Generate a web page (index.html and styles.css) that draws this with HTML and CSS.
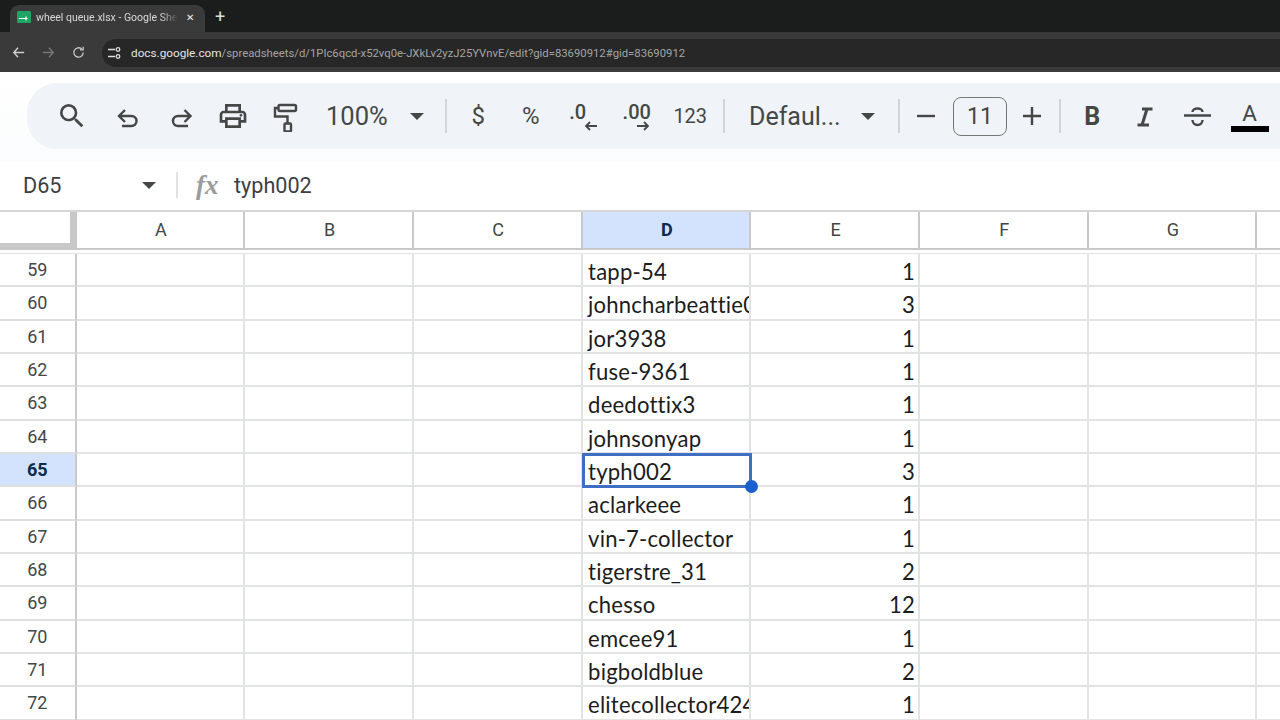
FILE: index.html
```html
<!DOCTYPE html>
<html lang="en">
<head>
<meta charset="utf-8">
<title>wheel queue.xlsx - Google Sheets</title>
<link rel="stylesheet" href="styles.css">
</head>
<body>
<header class="browser">
  <div class="tabstrip">
    <div class="tab">
      <svg class="favicon" viewBox="0 0 14 12"><rect width="14" height="12" rx="1.5" fill="#1fa463"/><path d="M2 7.5h8.5M9 5.5v4" stroke="#fff" stroke-width="1.2" fill="none"/></svg>
      <span class="tab-title">wheel queue.xlsx - Google Shee</span>
      <span class="tab-close">✕</span>
    </div>
    <span class="new-tab">+</span>
  </div>
  <div class="addressbar">
    <svg class="nav" viewBox="0 0 16 16"><path d="M14 8H3M7.5 3 3 8l4.500 5" fill="none" stroke="#d0d0d0" stroke-width="1.500"/></svg>
    <svg class="nav" viewBox="0 0 16 16"><path d="M2 8h11M8.500 3 13 8l-4.500 5" fill="none" stroke="#777" stroke-width="1.500"/></svg>
    <svg class="nav" viewBox="0 0 16 16"><path d="M13 8a5 5 0 1 1-1.600-3.700M13 1.800v3.400H9.600" fill="none" stroke="#c8c8c8" stroke-width="1.400"/></svg>
    <div class="urlpill">
      <svg class="site" viewBox="0 0 16 16"><path d="M2 4.500h7M2 11.500h7" stroke="#ddd" stroke-width="1.400"/><circle cx="12" cy="4.500" r="1.800" fill="none" stroke="#ddd" stroke-width="1.300"/><circle cx="12" cy="11.500" r="1.800" fill="none" stroke="#ddd" stroke-width="1.300"/></svg>
      <span class="url"><b>docs.google.com</b>/spreadsheets/d/1PIc6qcd-x52vq0e-JXkLv2yzJ25YVnvE/edit?gid=83690912#gid=83690912</span>
    </div>
  </div>
</header>

<section class="toolwrap">
  <div class="toolbar">
    <span class="tool w-search"><svg viewBox="0 0 24 24"><path d="M15.500 14h-.79l-.28-.27A6.471 6.471 0 0 0 16 9.500 6.500 6.500 0 1 0 9.500 16c1.610 0 3.090-.59 4.230-1.570l.27.28v.79l5 4.990L20.490 19l-4.990-5zm-6 0C7.010 14 5 11.990 5 9.500S7.010 5 9.500 5 14 7.010 14 9.500 11.990 14 9.500 14z"/></svg></span>
    <span class="tool"><svg class="line" viewBox="0 0 32 32"><path d="M13 10 7 16l6 6M7 16h12.500a5 5 0 0 1 0 10H10"/></svg></span>
    <span class="tool"><svg class="line" viewBox="0 0 32 32"><path d="m19.500 10 6 6-6 6M25.500 16H13a5 5 0 0 0 0 10h10"/></svg></span>
    <span class="tool"><svg viewBox="0 0 24 24"><path d="M19 8h-1V3H6v5H5c-1.660 0-3 1.340-3 3v6h4v4h12v-4h4v-6c0-1.660-1.340-3-3-3zM8 5h8v3H8V5zm8 12v2H8v-4h8v2zm2-2v-2H6v2H4v-4c0-.55.45-1 1-1h14c.55 0 1 .45 1 1v4h-2z"/><circle cx="18" cy="11.500" r="1"/></svg></span>
    <span class="tool"><svg class="line" viewBox="0 0 32 32"><rect x="8.500" y="5" width="17.500" height="6" rx="1.500"/><path d="M8.500 8H5v8.500h12.500V23"/><rect x="14.500" y="23.500" width="6.500" height="8" rx="1"/></svg></span>
    <span class="label zoomval">100%</span>
    <span class="caret c-zoom"></span>
    <span class="sep s1"></span>
    <span class="tool sym">$</span>
    <span class="tool sym">%</span>
    <span class="tool dec dec-one"><span class="dec-top">.0</span><svg class="line small" viewBox="0 0 14 10"><path d="M13 5H2M6 1 2 5l4 4"/></svg></span>
    <span class="tool dec dec-two"><span class="dec-top">.00</span><svg class="line small" viewBox="0 0 14 10"><path d="M1 5h11M8 1l4 4-4 4"/></svg></span>
    <span class="tool sym num">123</span>
    <span class="sep s2"></span>
    <span class="label fontname">Defaul...</span>
    <span class="caret c-font"></span>
    <span class="sep s3"></span>
    <span class="tool narrow"><svg class="line" viewBox="0 0 32 32"><path d="M7 16h18"/></svg></span>
    <span class="sizebox">11</span>
    <span class="tool narrow"><svg class="line" viewBox="0 0 32 32"><path d="M7 16h18M16 7v18"/></svg></span>
    <span class="sep s4"></span>
    <span class="tool bold">B</span>
    <span class="tool"><svg class="line thick" viewBox="0 0 32 32"><path d="M13 9h10.500M8.500 25H20M18 9l-5 16"/></svg></span>
    <span class="tool"><svg class="line" viewBox="0 0 32 32"><path d="M3 15.500h27M11.500 12a5 3.500 0 0 1 10 0M11.500 20a5 5 0 0 0 10 0"/></svg></span>
    <span class="tool textcolor"><span class="a">A</span><span class="a-bar"></span></span>
  </div>
</section>

<section class="formulabar">
  <span class="namebox">D65</span>
  <span class="caret c-name"></span>
  <span class="fsep"></span>
  <span class="fx">fx</span>
  <span class="fvalue">typh002</span>
</section>

<section class="sheet">
  <div class="colhead">
    <div class="corner"></div>
    <div class="ch">A</div><div class="ch">B</div><div class="ch">C</div>
    <div class="ch on">D</div><div class="ch">E</div><div class="ch">F</div><div class="ch">G</div><div class="ch"></div>
  </div>
  <div class="grid">
    <div class="rh">59</div><div class="c"></div><div class="c"></div><div class="c"></div><div class="c">tapp-54</div><div class="c n">1</div><div class="c"></div><div class="c"></div><div class="c"></div>
    <div class="rh">60</div><div class="c"></div><div class="c"></div><div class="c"></div><div class="c">johncharbeattie01</div><div class="c n">3</div><div class="c"></div><div class="c"></div><div class="c"></div>
    <div class="rh">61</div><div class="c"></div><div class="c"></div><div class="c"></div><div class="c">jor3938</div><div class="c n">1</div><div class="c"></div><div class="c"></div><div class="c"></div>
    <div class="rh">62</div><div class="c"></div><div class="c"></div><div class="c"></div><div class="c">fuse-9361</div><div class="c n">1</div><div class="c"></div><div class="c"></div><div class="c"></div>
    <div class="rh">63</div><div class="c"></div><div class="c"></div><div class="c"></div><div class="c">deedottix3</div><div class="c n">1</div><div class="c"></div><div class="c"></div><div class="c"></div>
    <div class="rh">64</div><div class="c"></div><div class="c"></div><div class="c"></div><div class="c">johnsonyap</div><div class="c n">1</div><div class="c"></div><div class="c"></div><div class="c"></div>
    <div class="rh on">65</div><div class="c"></div><div class="c"></div><div class="c"></div><div class="c sel">typh002<span class="handle"></span></div><div class="c n">3</div><div class="c"></div><div class="c"></div><div class="c"></div>
    <div class="rh">66</div><div class="c"></div><div class="c"></div><div class="c"></div><div class="c">aclarkeee</div><div class="c n">1</div><div class="c"></div><div class="c"></div><div class="c"></div>
    <div class="rh">67</div><div class="c"></div><div class="c"></div><div class="c"></div><div class="c">vin-7-collector</div><div class="c n">1</div><div class="c"></div><div class="c"></div><div class="c"></div>
    <div class="rh">68</div><div class="c"></div><div class="c"></div><div class="c"></div><div class="c">tigerstre_31</div><div class="c n">2</div><div class="c"></div><div class="c"></div><div class="c"></div>
    <div class="rh">69</div><div class="c"></div><div class="c"></div><div class="c"></div><div class="c">chesso</div><div class="c n">12</div><div class="c"></div><div class="c"></div><div class="c"></div>
    <div class="rh">70</div><div class="c"></div><div class="c"></div><div class="c"></div><div class="c">emcee91</div><div class="c n">1</div><div class="c"></div><div class="c"></div><div class="c"></div>
    <div class="rh">71</div><div class="c"></div><div class="c"></div><div class="c"></div><div class="c">bigboldblue</div><div class="c n">2</div><div class="c"></div><div class="c"></div><div class="c"></div>
    <div class="rh">72</div><div class="c"></div><div class="c"></div><div class="c"></div><div class="c">elitecollector424</div><div class="c n">1</div><div class="c"></div><div class="c"></div><div class="c"></div>
  </div>
</section>
</body>
</html>
```
FILE: styles.css
```css
* { box-sizing: border-box; }
html, body { margin: 0; height: 720px; overflow: hidden; background: #fff; }
body { width: 1280px; font-family: Roboto, "Liberation Sans", sans-serif; color: #444746; }

/* browser chrome */
.browser { height: 72px; background: #3a3a3a; }
.tabstrip { height: 32px; background: #1b1c1c; display: flex; align-items: flex-end; padding-left: 10px; }
.tab { width: 195px; height: 27px; background: #3a3a3a; border-radius: 9px 9px 0 0; display: flex; align-items: center; padding: 0 10px 3px 7px; }
.favicon { width: 14px; height: 12px; flex: none; margin-right: 5px; }
.tab-title { width: 142px; font-size: 10.500px; color: #d8d8d8; white-space: nowrap; overflow: hidden; -webkit-mask-image: linear-gradient(90deg, #000 88%, transparent); mask-image: linear-gradient(90deg, #000 88%, transparent); }
.tab-close { font-size: 10px; color: #eee; margin-left: 8px; }
.new-tab { color: #ddd; font-size: 18px; line-height: 1; margin: 0 0 6px 10px; }
.addressbar { height: 40px; display: flex; align-items: center; padding: 1px 0 0 11px; }
.nav { width: 15px; height: 15px; flex: none; margin-right: 15px; }
.urlpill { flex: 1; height: 28px; margin-left: 1px; background: #272727; border-radius: 14px 0 0 14px; display: flex; align-items: center; padding-left: 4px; }
.site { width: 16px; height: 16px; margin-right: 9px; flex: none; }
.url { font-size: 11.300px; color: #a5a5a5; white-space: nowrap; }
.url b { font-size: 11.750px; font-weight: 400; color: #e4e4e4; }

/* toolbar */
.toolwrap { height: 90px; padding: 11px 0 0 27px; background: linear-gradient(#fff, #fbfcfd); }
.toolbar { height: 66px; background: #f0f4f8; border-radius: 30px 0 0 30px; display: flex; align-items: center; padding-left: 19px; color: #444746; }
.tool { width: 52.500px; height: 40px; flex: none; display: flex; align-items: center; justify-content: center; }
.tool svg { width: 32px; height: 32px; fill: #444746; }
.w-search { margin-right: 3.500px; }
.line { fill: none !important; stroke: #444746; stroke-width: 2.400; }
.tool .line.small { width: 14px; height: 10px; stroke-width: 1.800; margin-top: -1px; }
.thick { stroke-width: 3; }
.label { flex: none; white-space: nowrap; color: #444746; }
.zoomval { font-size: 25.500px; width: 62px; margin-left: 14px; }
.caret { width: 0; height: 0; flex: none; border-left: 7px solid transparent; border-right: 7px solid transparent; border-top: 7px solid #444746; }
.c-zoom { margin: 0 21px 0 22px; }
.sep { width: 2px; height: 34px; background: #d2d5d9; flex: none; }
.s1 { margin-right: 5px; }
.s2 { margin: 0 24px 0 6.500px; }
.s3 { margin: 0 0 0 23px; }
.s4 { margin: 0 5px 0 1px; }
.sym { font-size: 24px; }
.num { font-size: 20px; margin-left: 2px; }
.dec { font-size: 20px; font-weight: 500; flex-direction: column; line-height: 20px; }
.dec-one .dec-top { margin-left: -11px; }
.dec-one .small { margin-left: 15px; }
.dec-two .dec-top { margin-left: 2px; }
.dec-two .small { margin-left: 14px; }
.bold { font-size: 25px; font-weight: 700; }
.narrow { width: 52px; }
.sizebox { width: 54px; height: 39px; flex: none; border: 1px solid #747775; border-radius: 8px; font-size: 23px; display: flex; align-items: center; justify-content: center; margin: 0 -1px 0 1px; }
.fontname { font-size: 25px; width: 89px; }
.c-font { margin-left: 23px; }
.textcolor { flex-direction: column; width: 52px; }
.a { font-size: 22.500px; line-height: 24px; }
.a-bar { width: 38px; height: 6px; background: #000; margin-top: 1px; }

/* formula bar */
.formulabar { height: 48px; background: #fff; display: flex; align-items: center; padding: 0 0 2px 23px; }
.namebox { width: 119px; font-size: 21.600px; color: #3c4043; }
.c-name { margin-right: 20px; }
.fsep { width: 2px; height: 26px; background: #e0e2e4; margin-right: 18px; }
.fx { font-family: "Liberation Serif", serif; font-style: italic; font-weight: 700; font-size: 27px; color: #9a9c9e; width: 38px; }
.fvalue { font-size: 21.600px; color: #3c4043; }

/* sheet */
.sheet { height: 510px; overflow: hidden; }
.colhead, .grid { display: grid; grid-template-columns: 76.500px repeat(8, 168.700px); }
.colhead { height: 43px; border-top: 2px solid #d6d6d6; padding-bottom: 3px; }
.corner { background: #fff; border-right: 7px solid #c8c8c8; border-bottom: 7px solid #c8c8c8; }
.ch { border-right: 2px solid #c9c9c9; border-bottom: 2px solid #c9c9c9; display: flex; align-items: center; justify-content: center; font-size: 18px; color: #444746; padding: 0 0 2px 2px; }
.ch.on { background: #d3e3fd; color: #0b2a50; font-weight: 700; }
.grid { grid-auto-rows: 33.333px; border-top: 1px solid #e2e3e3; }
.rh { border-right: 2px solid #c9c9c9; border-bottom: 2px solid #dedfdf; display: flex; align-items: center; justify-content: center; font-size: 18px; color: #444746; }
.rh.on { background: #d3e3fd; color: #0b2a50; font-weight: 700; }
.c { position: relative; border-right: 2px solid #e2e3e3; border-bottom: 2px solid #e2e3e3; font-family: Lato, "Liberation Sans", sans-serif; font-size: 22.100px; letter-spacing: 0.200px; line-height: 36px; color: #1c1c1c; padding: 0 0 0 5.500px; white-space: nowrap; overflow: hidden; }
.n { text-align: right; padding: 0 3px 0 0; }
.sel { overflow: visible; outline: 3px solid #3f6fc4; outline-offset: -2px; z-index: 2; }
.handle { position: absolute; right: -9px; bottom: -8px; width: 13px; height: 13px; border-radius: 50%; background: #1a5fd0; }
```
